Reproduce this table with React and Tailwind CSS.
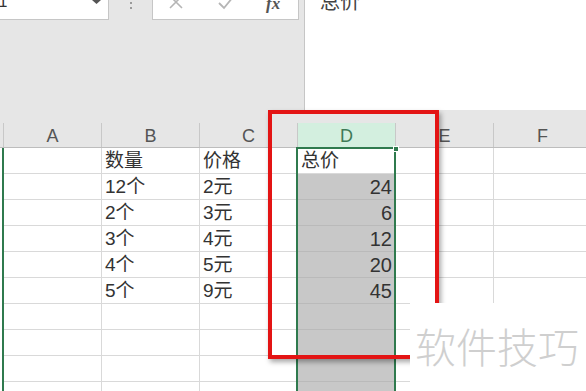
import React from 'react'

const font = { fontFamily: '"Liberation Sans", "Noto Sans CJK SC", sans-serif' }

const cols = ['A', 'B', 'C', 'D', 'E', 'F']

const data = [
  ['', '数量', '价格', '总价'],
  ['', '12个', '2元', '24'],
  ['', '2个', '3元', '6'],
  ['', '3个', '4元', '12'],
  ['', '4个', '5元', '20'],
  ['', '5个', '9元', '45'],
  ['', '', '', ''],
  ['', '', '', ''],
  ['', '', '', ''],
  ['', '', '', ''],
]

const FormulaBar = () => (
  <div className="flex h-[123px] bg-[#e6e6e6]">
    <div className="w-[304px] shrink-0">
      <div className="flex h-[20px] items-start">
        <div className="relative w-[109px] h-[20px] bg-white border-r border-b border-[#c6c6c6] overflow-hidden">
          <span className="absolute left-[-13px] top-[-10px] text-[16px] text-[#333]">D1</span>
          <svg className="absolute left-[92px] top-0" width="9" height="4" viewBox="0 0 9 4">
            <path d="M0 0 L9 0 L4.5 4 Z" fill="#555" />
          </svg>
        </div>
        <div className="w-[43px] h-[20px] flex flex-col items-center pt-[2px] gap-[3px]">
          <div className="w-[2px] h-[2px] bg-[#9a9a9a]" />
          <div className="w-[2px] h-[2px] bg-[#9a9a9a]" />
        </div>
        <div className="relative w-[147px] h-[20px] bg-white border border-t-0 border-[#c6c6c6]">
          <svg className="absolute left-[16px] top-[-4px]" width="14" height="13" viewBox="0 0 14 13">
            <path d="M1 0 L13 12 M13 0 L1 12" stroke="#b5b5b5" strokeWidth="1.6" />
          </svg>
          <svg className="absolute left-[65px] top-[-4px]" width="16" height="14" viewBox="0 0 16 14">
            <path d="M1 7 L6 12 L15 1" stroke="#b5b5b5" strokeWidth="1.8" fill="none" />
          </svg>
          <span
            className="absolute left-[113px] top-[-9px] text-[17px] italic font-bold text-[#555]"
            style={{ fontFamily: '"Liberation Serif", serif' }}
          >
            fx
          </span>
        </div>
      </div>
    </div>
    <div className="relative flex-1 h-[110px] bg-white border-l border-[#c6c6c6]">
      <span className="absolute left-[15px] top-[-13px] text-[20px] text-[#444]">总价</span>
    </div>
  </div>
)

const HeaderRow = () => (
  <div className="flex h-[25px] bg-[#e6e6e6] border-b border-[#bdbdbd]">
    <div className="w-[4px] shrink-0 border-r border-[#c8c8c8]" />
    {cols.map((c) => (
      <div
        key={c}
        className={
          c === 'D'
            ? 'w-[98px] shrink-0 flex items-end justify-center pb-[1px] text-[18px] leading-[20px] text-[#3f7a57] bg-[#d3efdf] border-r border-[#c8c8c8]'
            : 'w-[98px] shrink-0 flex items-end justify-center pb-[1px] text-[18px] leading-[20px] text-[#555] border-r border-[#c8c8c8]'
        }
      >
        {c}
      </div>
    ))}
  </div>
)

const Row = ({ cells, index }) => (
  <div className="flex h-[26px]">
    <div className="w-[4px] shrink-0 border-r-2 border-[#2f7a4e]" />
    {cols.map((c, i) => {
      const value = cells[i] || ''
      const isD = c === 'D'
      const gray = isD && index > 0
      const numeric = /^\d+$/.test(value)
      return (
        <div
          key={c}
          className={
            gray
              ? 'w-[98px] shrink-0 flex items-end justify-end pr-[4px] pb-[1px] bg-[#c8c8c8] border-b border-[#bababa] text-[20px] leading-[22px] text-[#333]'
              : numeric
              ? 'w-[98px] shrink-0 flex items-end justify-end pr-[4px] pb-[1px] border-r border-b border-[#d9d9d9] text-[20px] leading-[22px] text-[#333]'
              : 'w-[98px] shrink-0 flex items-end pl-[3px] pb-[1px] border-r border-b border-[#d9d9d9] text-[19px] leading-[22px] text-[#333]'
          }
        >
          {value}
        </div>
      )
    })}
  </div>
)

export default function App() {
  return (
    <div className="relative w-[586px] h-[391px] overflow-hidden bg-white" style={font}>
      <FormulaBar />
      <HeaderRow />
      <div>
        {data.map((cells, i) => (
          <Row key={i} cells={cells} index={i} />
        ))}
      </div>

      {/* selected column D */}
      <div className="absolute left-[296px] top-[147px] w-[100px] h-[260px] border-x-2 border-t-2 border-[#2f7a4e]" />
      <div className="absolute left-[393px] top-[146px] w-[6px] h-[6px] bg-[#2f7a4e] border border-white" />

      {/* red highlight box */}
      <div className="absolute left-[268px] top-[110px] w-[171px] h-[249px] border-[4px] border-[#e31414] shadow-[2px_3px_5px_rgba(0,0,0,0.35)]" />

      {/* watermark */}
      <div className="absolute left-[410px] top-[303px] w-[176px] h-[88px] bg-white flex items-start pl-[5px] pt-[18px]">
        <span
          className="text-[41px] leading-[48px] font-light text-[#cfcfcf] tracking-[0px]"
          style={{ fontFamily: '"Noto Sans CJK SC", sans-serif' }}
        >
          软件技巧
        </span>
      </div>
    </div>
  )
}
